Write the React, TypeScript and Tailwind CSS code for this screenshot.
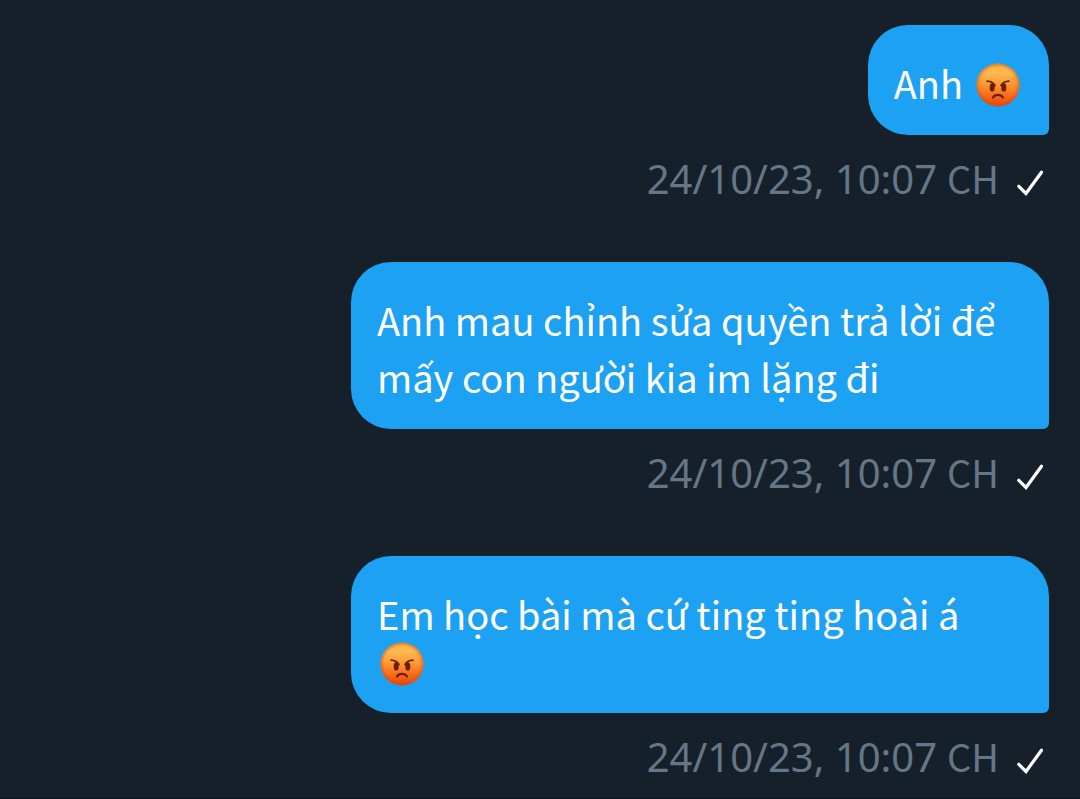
type Message = {
  text: string;
  emoji?: "inline" | "below";
  time: string;
  period: string;
};

const messages: Message[] = [
  { text: "Anh", emoji: "inline", time: "24/10/23, 10:07", period: "CH" },
  {
    text: "Anh mau chỉnh sửa quyền trả lời để mấy con người kia im lặng đi",
    time: "24/10/23, 10:07",
    period: "CH",
  },
  { text: "Em học bài mà cứ ting ting hoài á", emoji: "below", time: "24/10/23, 10:07", period: "CH" },
];

function AngryFace() {
  return (
    <svg role="img" aria-label="😡" viewBox="0 0 44 44" className="size-11 shrink-0">
      <defs>
        <linearGradient id="face" x1="0" y1="0" x2="0" y2="1">
          <stop offset="0" stopColor="#f9b03c" />
          <stop offset="0.2" stopColor="#ffbb55" />
          <stop offset="0.5" stopColor="#fc9631" />
          <stop offset="0.85" stopColor="#f25a12" />
          <stop offset="1" stopColor="#dd4a12" />
        </linearGradient>
        <radialGradient id="rim" cx="0.5" cy="0.5" r="0.5">
          <stop offset="0.82" stopColor="#d9480f" stopOpacity="0" />
          <stop offset="1" stopColor="#d9480f" stopOpacity="0.55" />
        </radialGradient>
      </defs>
      <circle cx="22" cy="22" r="21.5" fill="url(#face)" />
      <circle cx="22" cy="22" r="21.5" fill="url(#rim)" />
      <g fill="#6b1f06">
        <ellipse cx="16.2" cy="24.4" rx="2.5" ry="4.2" />
        <ellipse cx="27.8" cy="24.4" rx="2.5" ry="4.2" />
      </g>
      <g fill="none" stroke="#6b1f06" strokeWidth="1.8" strokeLinecap="round">
        <path d="M11.200 18.200c3.200.2 6 1.600 7.800 4.200" />
        <path d="M32.800 18.200c-3.200.2-6 1.600-7.800 4.200" />
        <path d="M17 34.500c2.300-3.600 7.700-3.600 10 0" strokeWidth="2.200" />
      </g>
    </svg>
  );
}

function Check() {
  return (
    <svg aria-hidden="true" viewBox="0 0 26 26" className="size-[26px] shrink-0">
      <path d="M1.800 16.300l7.200 7.200L24.500 2.200" fill="none" stroke="#fff" strokeWidth="3.200" strokeLinecap="round" />
    </svg>
  );
}

function Bubble({ text, emoji }: Pick<Message, "text" | "emoji">) {
  return (
    <div
      className={`max-w-[698px] rounded-[40px] rounded-br-md bg-[#1da1f2] px-[26px] pt-[29px] pb-6 text-[38px] leading-[57px] text-white ${
        emoji === "below" ? "w-full" : ""
      }`}
    >
      {emoji === "inline" ? (
        <p className="flex items-center gap-[13px] pr-[3px]">
          {text}
          <span className="pt-1">
            <AngryFace />
          </span>
        </p>
      ) : (
        <p>{text}</p>
      )}
      {emoji === "below" && (
        <div className="flex h-[47px] items-start pl-[3px]">
          <AngryFace />
        </div>
      )}
    </div>
  );
}

export default function App() {
  return (
    <main className="min-h-screen border-b border-[#0d141a] bg-[#15202b] pt-[25px] pr-[31px] pl-4 font-['Noto_Sans_CJK_SC',sans-serif]">
      <ol className="flex flex-col gap-14">
        {messages.map((message, i) => (
          <li key={i} className="flex flex-col items-end gap-[15px]">
            <Bubble text={message.text} emoji={message.emoji} />
            <div className="flex items-center gap-[18px] pr-1.5 text-[#657786]">
              <time className="flex h-14 items-baseline gap-2.5 text-[38px] leading-[56px]">
                <span className="font-['Noto_Sans',sans-serif] text-[40px]">{message.time}</span>
                {message.period}
              </time>
              <span className="pt-2.5">
                <Check />
              </span>
            </div>
          </li>
        ))}
      </ol>
    </main>
  );
}
